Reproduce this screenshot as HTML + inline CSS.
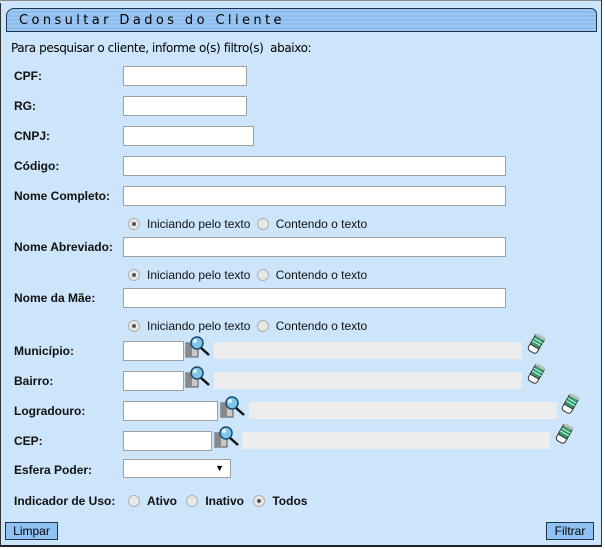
<!DOCTYPE html><html><head><style>
body{margin:0;width:605px;height:550px;background:#fff;font-family:"Liberation Sans",Arial,sans-serif;position:relative;overflow:hidden}
.a{position:absolute}
#bg{left:0;top:0;width:600px;height:545px;background:#cce5fb;border-right:1px solid #333;border-bottom:2px solid #222;border-left:1px solid #333}
#hd{left:6px;top:8px;border:1px solid #1e3350;border-radius:8px 6px 0 0;background:repeating-linear-gradient(#9cc7f3 0,#9cc7f3 2px,#8dbdef 2px,#8dbdef 4px);font-family:"DejaVu Sans",sans-serif;font-size:13px;letter-spacing:3.4px;line-height:24px;padding-left:12px;box-sizing:border-box;width:591px;height:24px;color:#000}
.l{font-size:12px;font-weight:bold;color:#111;left:14px}
.i{background:#fff;border:1px solid #a0a0a0;box-sizing:border-box;height:20px}
.g{background:#ededed;height:17px}
.r{font-size:12px;color:#111}
.rd{display:inline-block;width:12px;height:12px;border-radius:50%;border:1px solid #b0b0b0;background:#e8e8e8;vertical-align:-2px;margin-right:7px;box-sizing:border-box;position:relative}
.rd.on::after{content:"";position:absolute;left:3px;top:3px;width:4px;height:4px;border-radius:50%;background:#555}
.btn{font-size:12px;background:#8fc1f2;border:1px solid #1e3350;height:18px;line-height:17px;box-sizing:border-box;text-align:center}
</style></head><body>
<div class="a" id="bg"></div>
<div class="a" style="left:0;top:0;width:601px;height:2px;background:#cce5fb;border-top:1px solid #888"></div>
<div class="a" id="hd">Consultar Dados do Cliente</div>
<div class="a" style="left:11px;top:41px;font-size:12px;font-family:'DejaVu Sans',sans-serif;letter-spacing:-0.4px">Para pesquisar o cliente, informe o(s) filtro(s)&nbsp; abaixo:</div>

<div class="a l" style="top:69px">CPF:</div><div class="a i" style="left:123px;top:66px;width:124px"></div>
<div class="a l" style="top:99px">RG:</div><div class="a i" style="left:123px;top:96px;width:124px"></div>
<div class="a l" style="top:129px">CNPJ:</div><div class="a i" style="left:123px;top:126px;width:131px"></div>
<div class="a l" style="top:159px">Código:</div><div class="a i" style="left:123px;top:156px;width:383px"></div>
<div class="a l" style="top:189px">Nome Completo:</div><div class="a i" style="left:123px;top:186px;width:383px"></div>
<div class="a r" style="left:128px;top:217px"><span class="rd on"></span>Iniciando pelo texto <span class="rd" style="margin-left:3px"></span>Contendo o texto</div>
<div class="a l" style="top:240px">Nome Abreviado:</div><div class="a i" style="left:123px;top:237px;width:383px"></div>
<div class="a r" style="left:128px;top:268px"><span class="rd on"></span>Iniciando pelo texto <span class="rd" style="margin-left:3px"></span>Contendo o texto</div>
<div class="a l" style="top:291px">Nome da Mãe:</div><div class="a i" style="left:123px;top:288px;width:383px"></div>
<div class="a r" style="left:128px;top:319px"><span class="rd on"></span>Iniciando pelo texto <span class="rd" style="margin-left:3px"></span>Contendo o texto</div>

<svg width="0" height="0" style="position:absolute"><defs>
<g id="lp"><rect x="1" y="7" width="12" height="14" fill="#c8c8c8" stroke="#555"/><rect x="2" y="8" width="5" height="12" fill="#888"/><line x1="15" y1="11" x2="24" y2="19" stroke="#111" stroke-width="2.5"/><circle cx="12" cy="7" r="6" fill="#7fc6e8" stroke="#1a4a70" stroke-width="1.5"/><circle cx="10" cy="5" r="2" fill="#e4f6ff"/></g>
<g id="er"><g transform="rotate(30 9 10)"><rect x="4" y="1" width="10" height="18" rx="3" fill="#fff" stroke="#333"/><rect x="4" y="2" width="10" height="11" fill="#3a9a6a" stroke="#333"/><line x1="4" y1="6" x2="14" y2="6" stroke="#bfe" /><line x1="4" y1="9" x2="14" y2="9" stroke="#bfe"/><rect x="4" y="0" width="10" height="3" fill="#bbb"/></g></g>
</defs></svg>

<div class="a l" style="top:344px">Município:</div><div class="a i" style="left:123px;top:341px;width:61px"></div>
<svg class="a" style="left:185px;top:336px" width="28" height="24"><use href="#lp"/></svg>
<div class="a g" style="left:214px;top:342px;width:308px"></div>
<svg class="a" style="left:527px;top:334px" width="20" height="22"><use href="#er"/></svg>

<div class="a l" style="top:374px">Bairro:</div><div class="a i" style="left:123px;top:371px;width:61px"></div>
<svg class="a" style="left:185px;top:366px" width="28" height="24"><use href="#lp"/></svg>
<div class="a g" style="left:214px;top:372px;width:308px"></div>
<svg class="a" style="left:527px;top:364px" width="20" height="22"><use href="#er"/></svg>

<div class="a l" style="top:404px">Logradouro:</div><div class="a i" style="left:123px;top:401px;width:95px"></div>
<svg class="a" style="left:220px;top:396px" width="28" height="24"><use href="#lp"/></svg>
<div class="a g" style="left:249px;top:402px;width:308px"></div>
<svg class="a" style="left:561px;top:394px" width="20" height="22"><use href="#er"/></svg>

<div class="a l" style="top:434px">CEP:</div><div class="a i" style="left:123px;top:431px;width:89px"></div>
<svg class="a" style="left:214px;top:426px" width="28" height="24"><use href="#lp"/></svg>
<div class="a g" style="left:242px;top:432px;width:308px"></div>
<svg class="a" style="left:555px;top:424px" width="20" height="22"><use href="#er"/></svg>

<div class="a l" style="top:463px">Esfera Poder:</div>
<div class="a i" style="left:123px;top:459px;width:108px;height:19px;font-size:9px;text-align:right;padding-right:6px;line-height:17px">▼</div>

<div class="a l" style="top:494px">Indicador de Uso:</div>
<div class="a r" style="left:128px;top:494px;font-weight:bold"><span class="rd"></span>Ativo <span class="rd" style="margin-left:6px"></span>Inativo <span class="rd on" style="margin-left:6px"></span>Todos</div>

<div class="a btn" style="left:5px;top:522px;width:53px">Limpar</div>
<div class="a btn" style="left:546px;top:522px;width:48px">Filtrar</div>
</body></html>
